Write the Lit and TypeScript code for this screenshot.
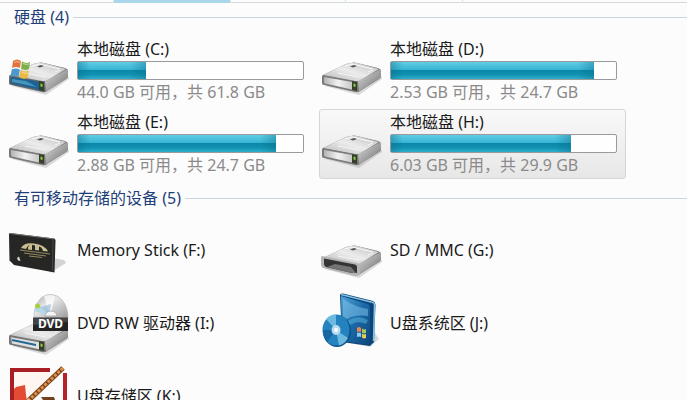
import { LitElement, html, css, svg, nothing } from "lit";
import { customElement, property } from "lit/decorators.js";
import { classMap } from "lit/directives/class-map.js";
import { styleMap } from "lit/directives/style-map.js";

type IconKind = "system" | "drive" | "stick" | "card" | "dvd" | "box" | "sketch";

interface Volume {
  name: string;
  icon: IconKind;
  used?: number;
  detail?: string;
  active?: boolean;
}

const fixedDisks: Volume[] = [
  { name: "本地磁盘 (C:)", icon: "system", used: 30, detail: "44.0 GB 可用，共 61.8 GB" },
  { name: "本地磁盘 (D:)", icon: "drive", used: 90, detail: "2.53 GB 可用，共 24.7 GB" },
  { name: "本地磁盘 (E:)", icon: "drive", used: 88, detail: "2.88 GB 可用，共 24.7 GB" },
  { name: "本地磁盘 (H:)", icon: "drive", used: 80, detail: "6.03 GB 可用，共 29.9 GB", active: true },
];

const removable: Volume[] = [
  { name: "Memory Stick (F:)", icon: "stick" },
  { name: "SD / MMC (G:)", icon: "card" },
  { name: "DVD RW 驱动器 (I:)", icon: "dvd" },
  { name: "U盘系统区 (J:)", icon: "box" },
  { name: "U盘存储区 (K:)", icon: "sketch" },
];

const gradients = svg`
  <defs>
    <linearGradient id="top" x1="0" y1="1" x2="1" y2="0">
      <stop offset="0" stop-color="#b4b4b4"/><stop offset=".5" stop-color="#ececec"/><stop offset="1" stop-color="#bcbcbc"/>
    </linearGradient>
    <linearGradient id="side" x1="0" y1="0" x2="1" y2="1">
      <stop offset="0" stop-color="#dcdcdc"/><stop offset=".5" stop-color="#a4a4a4"/><stop offset="1" stop-color="#6c6c6c"/>
    </linearGradient>
    <linearGradient id="front" x1="0" y1="0" x2="1" y2="0">
      <stop offset="0" stop-color="#b4b4b4"/><stop offset=".5" stop-color="#f2f2f2"/><stop offset="1" stop-color="#c8c8c8"/>
    </linearGradient>
    <linearGradient id="glass" x1="0" y1="0" x2="1" y2="1">
      <stop offset="0" stop-color="#4fa3d6"/><stop offset=".5" stop-color="#1b6aa8"/><stop offset="1" stop-color="#0e4478"/>
    </linearGradient>
    <linearGradient id="chrome" x1="0" y1="0" x2="1" y2="1">
      <stop offset="0" stop-color="#a8a8a8"/><stop offset=".4" stop-color="#e8e8e8"/><stop offset="1" stop-color="#9c9c9c"/>
    </linearGradient>
  </defs>`;

const body = svg`
  <path d="M4 50 38 59 61 43 60 40Z" fill="#999" opacity=".35"/>
  <path d="M2 39Q1 39 1 41V47Q1 49 3 49L34 56Q37 57 39 55L58 43Q60 42 60 40V35Q60 33 57 32L36 27Q33 26 30 27L25 28Z" fill="#777"/>
  <path d="M2 39 25 28Q31 26 36 27L58 33 38 45 34 45Z" fill="url(#top)"/>
  <path d="M37 45 59 33.500Q60 34 60 36V40Q60 42 58 43L38 55.500Z" fill="url(#side)"/>
  <path d="M24 30 31 28 52 33" fill="none" stroke="#fafafa" stroke-width="1"/>
  <path d="M29 30.500 33 29 36 30 32 31.500Z" fill="#555"/>
  <path d="M17 37 38 41 M47 36 52 34" stroke="#fafafa" stroke-width="1" fill="none" opacity=".8"/>`;

const led = svg`
  <path d="M31 45 36 46V55L31 54Z" fill="#34402a"/>
  <path d="M32.500 47.500 34.500 48V51L32.500 50.500Z" fill="#8ed03c"/>`;

const plainFront = svg`
  <path d="M2 39.500 36 45.500 37 56 3 48.500Q1.500 48 1.500 46Z" fill="#7c7c7c"/>
  <path d="M3 41 31 46V53.500L4 47.500Q3 47 3 46Z" fill="url(#front)"/>${led}`;

const flag = svg`
  <path d="M5 25Q9 22 13 25L12 32Q8 30 4 32Z" fill="#e2733c"/>
  <path d="M14 25.500Q18 28 22 26L21 33Q17 35 13 32.500Z" fill="#7fb04b"/>
  <path d="M3.700 33.500Q8 31.500 11.700 33.500L10.500 41Q7 38.500 2.500 41Z" fill="#4d98cc"/>
  <path d="M12.700 34Q17 36.500 21 34.500L19.500 42Q15 43.500 11.500 41.500Z" fill="#e9bb42"/>
  <path d="M6 26.500Q9 24.500 12 26.500M15 27.500Q18 29 21 28M14 36Q17 38 20 37" fill="none" stroke="#fff" opacity=".5"/>`;

const pictures = {
  drive: svg`${body}${plainFront}`,
  system: svg`${body}
    <path d="M2 40 36 46 37 56 3 48.500Q1.500 48 1.500 46Z" fill="#4d6470"/>
    <path d="M3 41 31 46V53.500L4 47.500Q3 47 3 46Z" fill="#1d6296"/>
    <path d="M4 43 18 45 29 51 4 46Z" fill="#58a8cc" opacity=".7"/>${led}${flag}`,
  card: svg`<g transform="translate(0 3)">${body}
    <path d="M1 37 36 44Q39 45 39 47V56L34 57 3 49Q0 48 0 46V39Q0 37 1 37Z" fill="#b4b4b4"/>
    <path d="M3 39.500 34 45.500Q36 46 36 48V54L31 54 5 48Q3 47 3 45Z" fill="#343434"/>
    <path d="M6 48 14 45 30 48 35 54 31 54Z" fill="#747474"/></g>`,
  stick: svg`
    <path d="M42 57 58 47 56 44 45 42Z" fill="#888" opacity=".35"/>
    <path d="M2 17 46 22.500Q47.500 23 47.500 24.500L46.500 56.500 6 49 1.500 44.500 1 18.500Q1 17 2 17Z" fill="#262624"/>
    <path d="M2 17.500 46.500 23" stroke="#777" stroke-width="1"/>
    <path d="M45 24 44.500 55" stroke="#4a4a46" stroke-width="1"/>
    <path d="M13 32Q16 26 26 27.500 37 29 40 35.500L35 35Q34 31 31 30.500V34.500L27 34V29.500L24 29V34L20 33.500Q20 30 22 28.500 19 30 18 33Z" fill="#c9bd91"/>
    <path d="M12 34 42 38M16 37 38 40M21 40 34 41.500" stroke="#94895f" stroke-width="1"/>
    <path d="M9 42 11 40.500 12.500 45 10 44.500Z" fill="#d5d5cf"/>`,
  dvd: svg`<g transform="translate(0 7)">${body}
    <path d="M2 40 36 46 37 56 3 48.500Q1.500 48 1.500 46Z" fill="#777"/>
    <path d="M3 41.300 31 46.300V53.300L4 47.500Z" fill="#e0e0e0"/>
    <path d="M4 44 28 49" stroke="#246a96" stroke-width="2"/>${led}</g>
    <path d="M26 29C26 16 32 5.500 42.500 5.500S60 16 60 29Z" fill="url(#chrome)" stroke="#aaa" stroke-width=".5"/>
    <path d="M42 28 36 7Q42 5 47 7Z" fill="#fff" opacity=".7"/>
    <path d="M42 27 29 13 26 22Z" fill="#b6d7ea"/>
    <path d="M41 26 33 18 43 15Z" fill="#8ab6db" opacity=".6"/>
    <circle cx="29.500" cy="17" r="2.500" fill="#a8cf3a"/>
    <path d="M37 27A6 5 0 0 1 49 27Z" fill="#f5f5f5" stroke="#999" stroke-width=".7"/>
    <path d="M25 28.500H60V42H25Z" fill="#242424"/>
    <path d="M25 28.500H60V33L25 36Z" fill="#fff" opacity=".15"/>
    <text class="disc" x="42.500" y="39" text-anchor="middle">DVD</text>`,
  box: svg`
    <path d="M22 53 49 58 58 50 54 44Z" fill="#888" opacity=".3"/>
    <path d="M19 6Q19 4 22 4.500L52 12Q54.500 13 54.500 16L53 53 49 57 21 53Z" fill="#0d4377"/>
    <path d="M20 7 47 15Q49 16 49 19V56L21 52Z" fill="url(#glass)"/>
    <path d="M20 5.500 52 13.500Q53.500 14 53.500 16L52.500 52" fill="none" stroke="#80c1e5" stroke-width="1.500"/>
    <path d="M22 10Q34 18 47 20V27Q30 25 22 33Z" fill="#84c8ee" opacity=".5"/>
    <path d="M24 35Q34 24 47 31L45 35Q36 30 24 39Z" fill="#59b7e0" opacity=".5"/>
    <path d="M36 39Q38 37 40 39V43Q38 42 36 43Z" fill="#e9854e"/>
    <path d="M41 39.500Q43 41 45 40V44Q43 45 41 43.500Z" fill="#a8c95a"/>
    <path d="M36 44Q38 43 40 44V48Q38 47 36 48Z" fill="#8acbec"/>
    <path d="M41 44.500Q43 46 45 45V49Q43 50 41 48.500Z" fill="#edcc55"/>
    <ellipse cx="16" cy="42" rx="14" ry="16" fill="#0d508a"/>
    <ellipse cx="15" cy="41" rx="13.500" ry="15.500" fill="#2482be"/>
    <path d="M15 41 5 30Q9 25 15 25.500ZM15 41 27 49Q24 55 18 56.500Z" fill="#8bd0ee" opacity=".7"/>
    <path d="M15 41 2 41Q2 48 6 53Z" fill="#0e5590" opacity=".6"/>
    <ellipse cx="15" cy="41" rx="4.500" ry="5" fill="#b8dbee"/>
    <ellipse cx="15" cy="41" rx="2" ry="2.200" fill="#f7fbfd"/>`,
  sketch: svg`
    <path d="M4 60V8H42" fill="none" stroke="#a91e25" stroke-width="4"/>
    <path d="M57 11V60" stroke="#b5232a" stroke-width="4"/>
    <path d="M6 10H44L27 30 16 44H6Z" fill="#fdf6f1"/>
    <path d="M8 25 17 23 18 33 20 46H6V27Z" fill="#e44b35"/>
    <path d="M55 6 20 39" stroke="#7c421d" stroke-width="5"/>
    <path d="M55 6 20 39" stroke="#dc9047" stroke-width="3" stroke-dasharray="3 1.500"/>
    <path d="M20 36 24 40 16 44Z" fill="#edbe7b"/>
    <path d="M33 35H46L47 38H35Z" fill="#74411f"/>`,
};

@customElement("volume-tile")
export class VolumeTile extends LitElement {
  @property({ attribute: false }) volume!: Volume;

  static styles = css`
    :host {
      display: block;
    }
    .tile {
      display: flex;
      align-items: center;
      gap: 9px;
      box-sizing: border-box;
      width: 100%;
      height: 70px;
      padding: 0 8px 2px 1px;
      border: 1px solid transparent;
      border-radius: 3px;
      background: none;
      font: inherit;
      color: inherit;
      text-align: left;
    }
    .active {
      border-color: #d6d6d6;
      background: linear-gradient(#f9f9f9, #e7e7e7);
    }
    .icon {
      flex: none;
      width: 60px;
      height: 68px;
      overflow: visible;
    }
    .disc {
      font: bold 12px "Noto Sans", sans-serif;
      fill: #fff;
    }
    .info {
      display: flex;
      flex: 1;
      flex-direction: column;
      gap: 2px;
      min-width: 0;
    }
    .name,
    .detail {
      line-height: 20px;
      white-space: nowrap;
    }
    .detail {
      color: #8a8a8a;
    }
    .bar {
      box-sizing: border-box;
      height: 19px;
      border: 1px solid #9a9a9e;
      border-radius: 2px;
      background: #fefefe;
    }
    .fill {
      height: 100%;
      background:
        linear-gradient(90deg, #0b6d8a66, #0b6d8a00 12px, #0b6d8a00 calc(100% - 16px), #0b6d8a66),
        linear-gradient(#62cde4, #37b5d5 45%, #0b87a8 50%, #1192b2 75%, #2db0cc);
    }
  `;

  render() {
    const { name, icon, used, detail, active } = this.volume;
    return html`
      <button class=${classMap({ tile: true, active: !!active })} type="button">
        <svg class="icon" viewBox="0 0 60 68" aria-hidden="true">${gradients}${pictures[icon]}</svg>
        <span class="info">
          <span class="name">${name}</span>
          ${used === undefined
            ? nothing
            : html`<div class="bar" role="meter" aria-label=${name} aria-valuenow=${used} aria-valuemin="0" aria-valuemax="100">
                  <div class="fill" style=${styleMap({ width: `${used}%` })}></div>
                </div>
                <span class="detail">${detail}</span>`}
        </span>
      </button>
    `;
  }
}

@customElement("app-root")
export class AppRoot extends LitElement {
  static styles = css`
    :host {
      display: block;
      height: 100vh;
      overflow: hidden;
      background: #fcfcfc;
      color: #1a1a1a;
      font: 16px/20px "Noto Sans", "Noto Sans CJK SC", sans-serif;
    }
    .toolbar {
      display: grid;
      grid-template-columns: 114px 117px 115px 117px 1fr;
      height: 3px;
      box-sizing: border-box;
      border-bottom: 1px solid #d3dadd;
    }
    .segment {
      border-right: 1px solid #dde2e4;
    }
    .segment:last-child {
      border-right: none;
    }
    .current {
      height: 3px;
      background: #a9d8ea;
    }
    .group {
      padding-top: 4px;
    }
    .group + .group {
      padding-top: 9px;
    }
    .heading {
      display: flex;
      align-items: center;
      gap: 4px;
      margin: 0 0 9px;
      padding-left: 14px;
      font: inherit;
      color: #1e3f7a;
    }
    .group + .group .heading {
      margin-bottom: 8px;
    }
    .heading::after {
      content: "";
      flex: 1;
      height: 1px;
      background: #cdd5dc;
    }
    .tiles {
      display: grid;
      grid-template-columns: repeat(auto-fill, 307px);
      gap: 3px 6px;
      margin: 0;
      padding: 0 6px;
      list-style: none;
    }
  `;

  private group(title: string, volumes: Volume[]) {
    return html`
      <section class="group">
        <h2 class="heading">${title} (${volumes.length})</h2>
        <ul class="tiles">
          ${volumes.map((v) => html`<li><volume-tile .volume=${v}></volume-tile></li>`)}
        </ul>
      </section>
    `;
  }

  render() {
    return html`
      <div class="toolbar">
        <span class="segment"></span><span class="segment current"></span><span class="segment"></span>
        <span class="segment"></span><span class="segment"></span>
      </div>
      <main>${this.group("硬盘", fixedDisks)}${this.group("有可移动存储的设备", removable)}</main>
    `;
  }
}
